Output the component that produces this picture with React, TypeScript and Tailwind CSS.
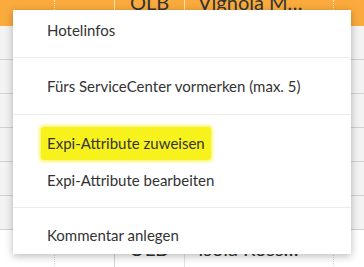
import React from "react";

const font = { fontFamily: '"Source Sans Pro", Lato, "Open Sans", sans-serif' };

function Row({ className, children }: { className: string; children?: React.ReactNode }) {
  return (
    <div className={`flex w-full ${className}`}>
      <div className="w-[55px] shrink-0 border-r border-dotted border-inherit" />
      <div className="w-[60px] shrink-0 border-r border-inherit" />
      {children}
      <div className="flex-1 border-l border-dotted border-inherit" />
    </div>
  );
}

export default function App() {
  return (
    <div className="relative h-[267px] w-[364px] overflow-hidden bg-white" style={font}>
      {/* table behind the menu */}
      <div className="flex flex-col">
        <Row className="h-[26px] bg-[#fbab3d] border-[#fde3b8] text-[#333]">
          <div className="flex w-[70px] shrink-0 justify-center border-r border-[#fde3b8] text-[20px] leading-none -mt-[8px]">
            OLB
          </div>
          <div className="w-[148px] shrink-0 pl-[13px] text-[20px] leading-none -mt-[8px]">Vignola M…</div>
        </Row>
        {[0, 1, 2, 3, 4, 5].map((i) => (
          <Row key={i} className="h-[34px] bg-[#f3f3f3] border-[#d2d2d2] border-b border-b-dotted">
            <div className="w-[70px] shrink-0 border-r border-[#e2e2e2]" />
            <div className="w-[148px] shrink-0" />
          </Row>
        ))}
        <Row className="h-[40px] bg-white border-[#d2d2d2]">
          <div className="flex w-[70px] shrink-0 justify-center border-r border-[#e2e2e2] pt-[8px] text-[20px] leading-none text-[#333]">
            OLD
          </div>
          <div className="w-[148px] shrink-0 pl-[13px] pt-[8px] text-[20px] leading-none text-[#333]">Isola Ross…</div>
        </Row>
      </div>

      {/* context menu */}
      <div className="absolute left-[13px] top-[10px] w-[338px] bg-white text-[15px] text-[#333] shadow-[0_2px_8px_rgba(0,0,0,0.28)]">
        <div className="pt-[2px] pb-[8px]">
          <div className="flex h-[37px] items-center pl-[34px]">Hotelinfos</div>
        </div>
        <div className="border-t border-[#ececec] pt-[10px] pb-[9px]">
          <div className="flex h-[37px] items-center pl-[34px]">Fürs ServiceCenter vormerken (max. 5)</div>
        </div>
        <div className="border-t border-[#ececec] pt-[10px] pb-[8px]">
          <div className="flex h-[37px] items-center pl-[28px]">
            <span className="rounded-[3px] bg-[#f8f21c] px-[6px] py-[5px] shadow-[0_0_3px_2px_rgba(248,242,28,0.6)]">
              Expi-Attribute zuweisen
            </span>
          </div>
          <div className="flex h-[37px] items-center pl-[34px]">Expi-Attribute bearbeiten</div>
        </div>
        <div className="border-t border-[#ececec] pt-[11px] pb-[3px]">
          <div className="flex h-[32px] items-center pl-[34px]">Kommentar anlegen</div>
        </div>
      </div>
    </div>
  );
}
